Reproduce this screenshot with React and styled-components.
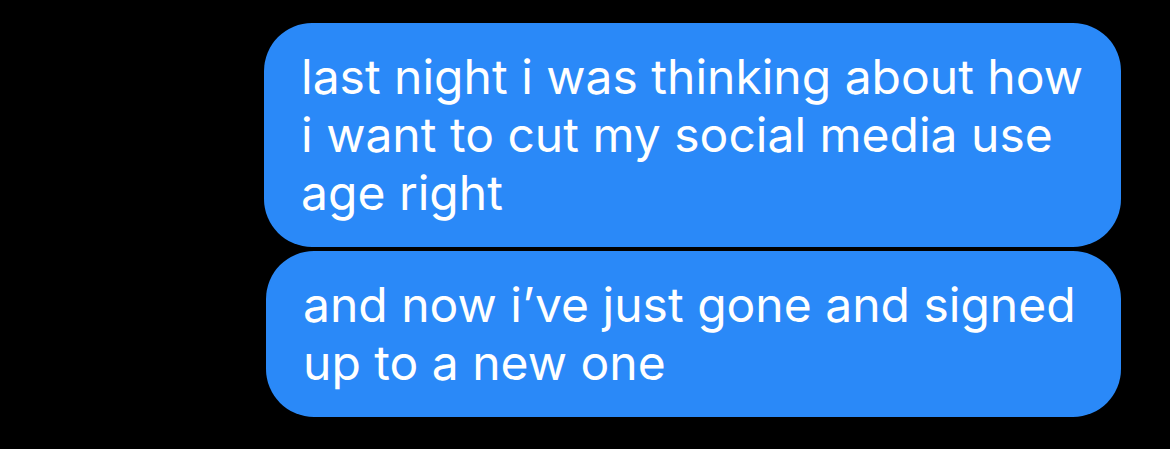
import React from 'react';
import styled, { createGlobalStyle } from 'styled-components';

const GlobalStyle = createGlobalStyle`
  html, body {
    margin: 0;
    padding: 0;
    background: #000;
  }
`;

const Thread = styled.div`
  width: 1170px;
  height: 449px;
  box-sizing: border-box;
  padding: 23px 49px 0 0;
  display: flex;
  flex-direction: column;
  align-items: flex-end;
  gap: 4px;
  background: #000;
`;

const Bubble = styled.div`
  width: ${(props) => props.width}px;
  box-sizing: border-box;
  padding: 25px 30px 25px 37px;
  background: #2a89f8;
  border-radius: 48px;
  color: #fff;
  font-family: Inter, "Open Sans", sans-serif;
  font-size: 48px;
  line-height: 58px;
  letter-spacing: 0;
  white-space: nowrap;
`;

const messages = [
  { id: 1, width: 857, text: ['last night i was thinking about how', 'i want to cut my social media use', 'age right'] },
  { id: 2, width: 855, text: ['and now i\u2019ve just gone and signed', 'up to a new one'] },
];

const App = () => (
  <>
    <GlobalStyle />
    <Thread>
      {messages.map((msg) => (
        <Bubble key={msg.id} width={msg.width}>
          {msg.text.map((line, i) => (
            <div key={i}>{line}</div>
          ))}
        </Bubble>
      ))}
    </Thread>
  </>
);

export default App;
